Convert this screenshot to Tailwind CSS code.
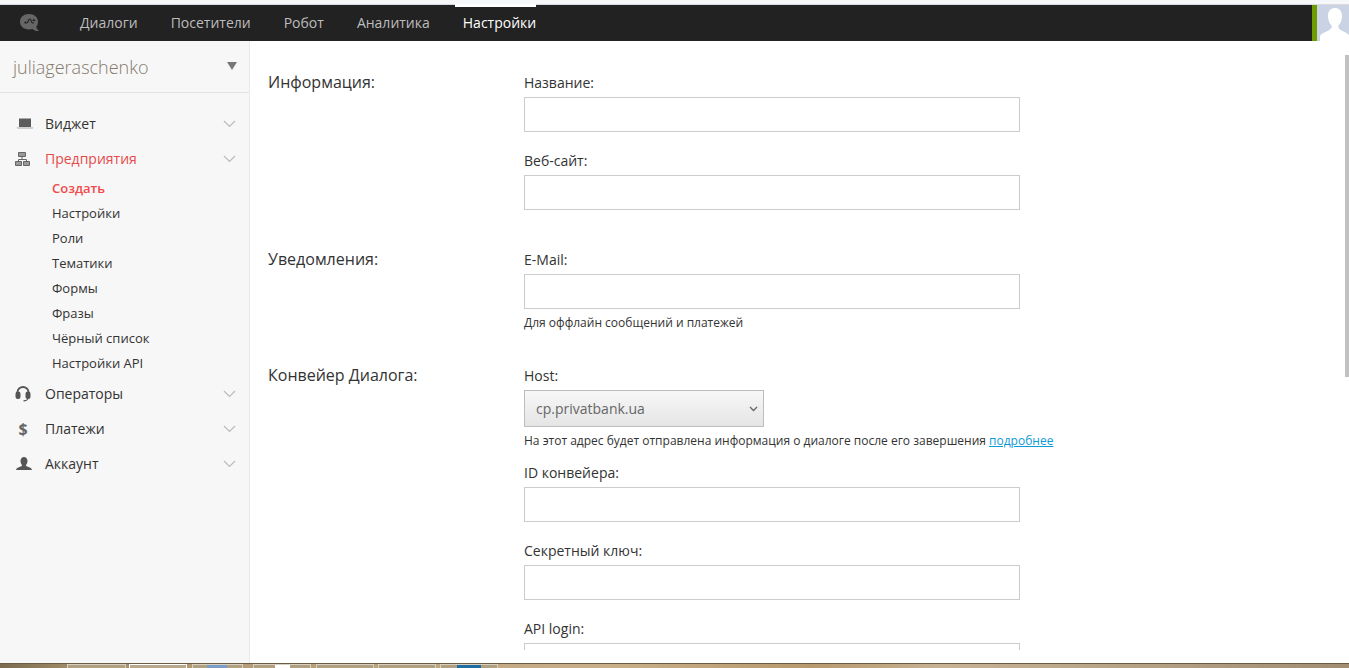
<!DOCTYPE html>
<html lang="ru">
<head>
<meta charset="utf-8">
<script src="https://cdn.jsdelivr.net/npm/@tailwindcss/browser@4"></script>
</head>
<body class="m-0 h-[668px] w-[1349px] overflow-hidden bg-white font-['Open_Sans',sans-serif] text-[#333]">
<div class="flex h-[668px] flex-col">
  <div class="h-[5px] shrink-0 border-b border-[#d8dce2] bg-[#f6f7f9]"></div>
  <header class="flex h-[36px] shrink-0 bg-[#222222]">
    <div class="flex w-[63px] shrink-0 items-center pl-[19px]">
      <svg class="h-[20px] w-[21px]" viewBox="0 0 21 20"><path fill="#666" d="M10 1C4.700 1 1 4.300 1 8.700s3.700 7.700 9 7.700c1.200 0 2.300-.2 3.300-.5 1.700 1.300 3.700 2.200 6.200 2.100.5 0 .5-.4.200-.6-1.200-.8-2.100-2-2.500-3.400C18.200 12.700 19 10.900 19 8.700 19 4.300 15.300 1 10 1z"/><path fill="none" stroke="#222" stroke-width="1.200" d="M5.500 10l1.400-1.400M5.500 10h2c1 0 1.200-.7 1.700-2s1-2 1.800-2c.7 0 1 .7 1.200 1.800.2 1 .6 2 1.400 2h1.200M13.500 7.500h2l-1.300-1.400"/></svg>
    </div>
    <nav class="flex text-[14px] leading-[36px] text-[#bdbdbd]">
      <a class="px-[17px]">Диалоги</a>
      <a class="px-[16px]">Посетители</a>
      <a class="px-[17px]">Робот</a>
      <a class="px-[16px]">Аналитика</a>
      <a class="relative ml-[9px] w-[81px] whitespace-nowrap pl-[8px] font-medium text-white">Настройки<span class="absolute left-0 right-0 top-0 h-[3px] -translate-y-[1px] bg-white"></span></a>
    </nav>
    <div class="ml-auto flex">
      <div class="w-[5px] bg-[#6f9c00]"></div>
      <div class="relative h-[36px] w-[32px] overflow-hidden bg-[#c9d3e3]">
        <svg class="absolute left-0 top-0 h-[36px] w-[32px]" viewBox="0 0 32 36"><path fill="#fff" d="M18 3c4.500 0 7 3 7 8 0 4-1.500 7.500-3.500 9.500-.7 2 .5 4 4 5.500 3.500 1.500 6 3 7 5v6H3v-6c1-2 4-3.500 7.500-5 3.500-1.500 4.700-3.500 4-5.500-2-2-3.500-5.500-3.500-9.500C11 6 13.500 3 18 3z"/></svg>
      </div>
    </div>
  </header>
  <div class="flex min-h-0 flex-1">
    <aside class="w-[250px] shrink-0 border-r border-[#e9e9e9] bg-[#f7f7f7]">
      <div class="flex h-[52px] items-center justify-between border-b border-[#e3e3e3] pl-[13px] pr-[12px]">
        <span class="pt-[2px] text-[18px] font-light text-[#857a6e]">juliageraschenko</span>
        <span class="mb-[2px] h-0 w-0 border-x-[5px] border-t-[8px] border-x-transparent border-t-[#777]"></span>
      </div>
      <ul class="pt-[13px] text-[14px]">
        <li class="flex h-[35px] items-center pl-[16px] pr-[13px]">
          <svg class="h-[16px] w-[18px] shrink-0" viewBox="0 0 18 16"><path fill="#5c5c5c" d="M3 2.500h12v8.500H3z"/><path fill="#aaa" d="M.5 11.500h17l-.8 1H1.300z"/></svg>
          <span class="ml-[11px] flex-1">Виджет</span>
          <svg class="h-[8px] w-[13px]" viewBox="0 0 13 8"><path fill="none" stroke="#bbb" stroke-width="1.200" d="M1 1l5.500 5.500L12 1"/></svg>
        </li>
        <li class="flex h-[35px] items-center pl-[15px] pr-[13px] text-[#e64b4b]">
          <svg class="h-[16px] w-[15px] shrink-0" viewBox="0 0 15 16"><path fill="#999" stroke="#666" d="M3.500 1.500h7v4h-7zM.5 10.500h6v4h-6zM8.500 10.500h6v4h-6z"/><path fill="none" stroke="#666" d="M7 5.500v3M3.500 10.500v-2h8v2"/></svg>
          <span class="ml-[15px] flex-1 font-medium">Предприятия</span>
          <svg class="h-[8px] w-[13px]" viewBox="0 0 13 8"><path fill="none" stroke="#bbb" stroke-width="1.200" d="M1 1l5.500 5.500L12 1"/></svg>
        </li>
        <li class="flex h-[25px] items-center pl-[52px] text-[13px] font-semibold text-[#f04a4a]">Создать</li>
        <li class="flex h-[25px] items-center pl-[52px] text-[13px]">Настройки</li>
        <li class="flex h-[25px] items-center pl-[52px] text-[13px]">Роли</li>
        <li class="flex h-[25px] items-center pl-[52px] text-[13px]">Тематики</li>
        <li class="flex h-[25px] items-center pl-[52px] text-[13px]">Формы</li>
        <li class="flex h-[25px] items-center pl-[52px] text-[13px]">Фразы</li>
        <li class="flex h-[25px] items-center pl-[52px] text-[13px]">Чёрный список</li>
        <li class="flex h-[25px] items-center pl-[52px] text-[13px]">Настройки API</li>
        <li class="flex h-[35px] items-center pl-[15px] pr-[13px]">
          <svg class="h-[16px] w-[16px] shrink-0" viewBox="0 0 16 16"><path fill="none" stroke="#555" stroke-width="1.800" d="M2.500 8V6a5.500 5 0 0 1 11 0v2"/><path fill="none" stroke="#555" stroke-width="1.200" d="M13 12c0 1.500-2 2.800-4.500 2.800"/><rect x=".5" y="5.500" width="5" height="7.500" rx="2.200" fill="#555"/><rect x="10.500" y="5.500" width="5" height="7.500" rx="2.200" fill="#555"/></svg>
          <span class="ml-[14px] flex-1">Операторы</span>
          <svg class="h-[8px] w-[13px]" viewBox="0 0 13 8"><path fill="none" stroke="#bbb" stroke-width="1.200" d="M1 1l5.500 5.500L12 1"/></svg>
        </li>
        <li class="flex h-[35px] items-center pl-[15px] pr-[13px]">
          <span class="w-[16px] shrink-0 text-center text-[16px] font-bold leading-none text-[#666]">$</span>
          <span class="ml-[14px] flex-1">Платежи</span>
          <svg class="h-[8px] w-[13px]" viewBox="0 0 13 8"><path fill="none" stroke="#bbb" stroke-width="1.200" d="M1 1l5.500 5.500L12 1"/></svg>
        </li>
        <li class="flex h-[35px] items-center pl-[15px] pr-[13px]">
          <svg class="h-[16px] w-[18px] shrink-0" viewBox="0 0 18 16"><path fill="#555" d="M9 1c2.200 0 3.500 1.700 3.500 4 0 1.700-.7 3-1.500 4 0 1 .8 1.500 2.500 2 1.700.5 3 1 3.500 3H1c.5-2 1.800-2.500 3.500-3S7 10 7 9C6.200 8 5.500 6.700 5.500 5 5.500 2.700 6.800 1 9 1z"/></svg>
          <span class="ml-[12px] flex-1">Аккаунт</span>
          <svg class="h-[8px] w-[13px]" viewBox="0 0 13 8"><path fill="none" stroke="#bbb" stroke-width="1.200" d="M1 1l5.500 5.500L12 1"/></svg>
        </li>
      </ul>
    </aside>
    <main class="relative min-w-0 flex-1">
      <div class="flex h-[609px] flex-col overflow-hidden pl-[18px] pt-[30px]">
        <section class="flex h-[177px] shrink-0">
          <h2 class="w-[256px] shrink-0 text-[16px] leading-[22px]">Информация:</h2>
          <div class="w-[496px] text-[14px]">
            <label class="block leading-[24px]">Название:</label>
            <input class="mt-[2px] block h-[35px] w-full border border-[#cccccc] bg-white">
            <label class="mt-[17px] block leading-[24px]">Веб-сайт:</label>
            <input class="mt-[2px] block h-[35px] w-full border border-[#cccccc] bg-white">
          </div>
        </section>
        <section class="flex h-[116px] shrink-0">
          <h2 class="w-[256px] shrink-0 text-[16px] leading-[22px]">Уведомления:</h2>
          <div class="w-[496px] text-[14px]">
            <label class="block leading-[24px]">E-Mail:</label>
            <input class="mt-[2px] block h-[35px] w-full border border-[#cccccc] bg-white">
            <p class="mt-[5px] text-[12px] leading-[18px]">Для оффлайн сообщений и платежей</p>
          </div>
        </section>
        <section class="flex shrink-0">
          <h2 class="w-[256px] shrink-0 text-[16px] leading-[22px]">Конвейер Диалога:</h2>
          <div class="w-[540px] text-[14px]">
            <label class="block leading-[24px]">Host:</label>
            <div class="relative mt-[2px] h-[37px] w-[240px]">
              <select class="block h-[37px] w-[240px] appearance-none border border-[#bdbdbd] bg-gradient-to-b from-[#f7f7f7] to-[#e5e5e5] pl-[11px] text-[14px] text-[#666]">
                <option>cp.privatbank.ua</option>
              </select>
              <svg class="absolute right-[6px] top-[16px] h-[6px] w-[9px]" viewBox="0 0 9 6"><path fill="none" stroke="#666" stroke-width="1.300" d="M1 1l3.500 3.500L8 1"/></svg>
            </div>
            <p class="mt-[5px] whitespace-nowrap text-[12px] leading-[18px]">На этот адрес будет отправлена информация о диалоге после его завершения <a class="text-[#0f9bd7] underline">подробнее</a></p>
            <label class="mt-[11px] block leading-[24px]">ID конвейера:</label>
            <input class="mt-[2px] block h-[35px] w-[496px] border border-[#cccccc] bg-white">
            <label class="mt-[17px] block leading-[24px]">Секретный ключ:</label>
            <input class="mt-[2px] block h-[35px] w-[496px] border border-[#cccccc] bg-white">
            <label class="mt-[17px] block leading-[24px]">API login:</label>
            <input class="mt-[2px] block h-[35px] w-[496px] border border-[#cccccc] bg-white">
          </div>
        </section>
      </div>
      <div class="absolute right-0 top-[14px] h-[322px] w-[4px] bg-[#c1c1c1]"></div>
    </main>
  </div>
  <footer class="relative flex h-[5px] shrink-0 overflow-hidden border-t border-[#6b5c48] bg-[linear-gradient(90deg,#7a6a50_0%,#a08a66_5%,#b19a74_15%,#c9b08a_45%,#b79a6d_60%,#c7b294_70%,#a18e72_100%)]">
    <div class="ml-[67px] flex">
      <span class="h-[4px] w-[59px] border border-b-0 border-[#d8d0c0] bg-[#b0a080]"></span>
      <span class="ml-[3px] h-[4px] w-[58px] border border-b-0 border-white bg-[#b8a98c]"></span>
      <span class="ml-[5px] h-[4px] w-[51px] border border-b-0 border-[#d8d0c0] bg-[linear-gradient(90deg,#b0a080_29%,#7a9cc8_29%,#7a9cc8_70%,#b0a080_70%)]"></span>
      <span class="ml-[10px] h-[4px] w-[58px] border border-b-0 border-[#d8d0c0] bg-[linear-gradient(90deg,#b0a080_38%,#ffffff_38%,#ffffff_64%,#b0a080_64%)]"></span>
      <span class="ml-[5px] h-[4px] w-[58px] border border-b-0 border-[#d8d0c0] bg-[#b0a080]"></span>
      <span class="ml-[4px] h-[4px] w-[58px] border border-b-0 border-[#d8d0c0] bg-[#b0a080]"></span>
      <span class="ml-[4px] h-[4px] w-[58px] border border-b-0 border-[#d8d0c0] bg-[linear-gradient(90deg,#b0a080_29%,#1c6ea4_29%,#1c6ea4_72%,#b0a080_72%)]"></span>
    </div>
  </footer>
</div>
</body>
</html>
